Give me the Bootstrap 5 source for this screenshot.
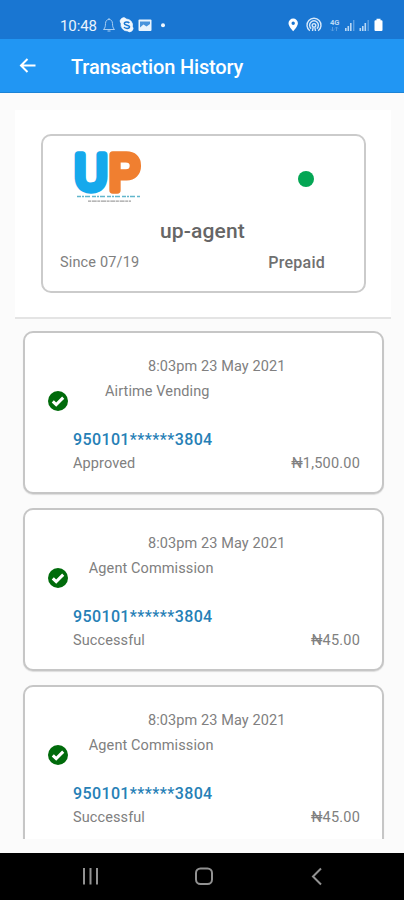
<!DOCTYPE html>
<html lang="en">
<head>
<meta charset="utf-8">
<meta name="viewport" content="width=device-width, initial-scale=1">
<title>Transaction History</title>
<link href="https://cdn.jsdelivr.net/npm/bootstrap@5.3.0/dist/css/bootstrap.min.css" rel="stylesheet">
<style>
body{font-family:Roboto,"Liberation Sans",sans-serif;background:#fbfbfb;color:#777;height:900px;overflow:hidden}
svg{display:block;flex:none}
.status-bar{height:39px;background:#1976d2;color:#eaf3fc;padding:12px 21px 0 60px}
.clock{font-size:15px;line-height:28px;letter-spacing:-.1px;width:43px}
.app-bar{height:54px;background:#2196f3;color:#fff;padding:0 19px;border-bottom:1px solid #1c83d6}
.app-bar h1{font-size:20px;font-weight:500;line-height:54px;margin-left:35px;padding-top:2px;letter-spacing:-.16px}
.screen{height:746px;overflow:hidden;padding:17px 13px 0 15px}
.profile-panel{height:209px;background:#fff;padding:24px 25px 0 26px;border-bottom:2px solid #e4e4e4}
.profile-card{height:159px;border:2px solid #cbcbcb;border-radius:10px;padding:16px 39px 0 17px}
.brand{margin-left:14px;overflow:visible}
.dot{width:16px;height:16px;background:#04a654;margin:19px 11px 0 0}
.agent{font-size:21px;font-weight:500;line-height:30px;color:#666;padding-left:20px;letter-spacing:.15px}
.since{font-size:14.5px;line-height:25px;color:#808080;letter-spacing:.15px}
.prepaid{font-size:16px;font-weight:500;line-height:25px;color:#707070;letter-spacing:.25px}
.tx-list{padding:12px 7px 0 8px;gap:14px}
.tx{height:163px;flex:none;border:2px solid #c6c6c6;border-radius:10px;background:#fff;padding:22px 22px 0 22px;box-shadow:0 1px 1px #ddd;font-size:14.5px;line-height:24.500px;color:#808080;letter-spacing:.1px}
.tx-head{height:72px}
.tx-icon{margin:36px 0 0 .5px}
.tx-info{width:218px}
.tx-kind{padding-right:72px}
.tx-kind-short{padding-right:76px}
.acct{font-size:16px;font-weight:500;color:#2680b6;padding-left:26px;line-height:25px;letter-spacing:.38px}
.tx-foot{padding-left:26px;line-height:23px}
.tx-foot .sum{letter-spacing:.2px}
.nav-keys{height:47px;background:#000}
.gap-end{height:14px}
</style>
</head>
<body>
<header>
<div class="status-bar d-flex align-items-start">
<span class="clock text-nowrap">10:48</span>
<svg width="68" height="27" viewBox="103 12 68 27" fill="none" stroke="#dbeaf9">
<path d="M103.500 29.500h11c-2-2-1.800-3.500-2-6-.2-2.800-1.500-4-3.500-4s-3.300 1.200-3.500 4c-.2 2.500 0 4-2 6ZM107.500 31h3M109 18v1.500" stroke="#a9cef2"/>
<path d="M126.500 19a6.300 6.300 0 0 1 6 7.500 3.400 3.400 0 0 1-5 4.500 6.300 6.300 0 0 1-6.500-7.500 3.400 3.400 0 0 1 5.500-4.500Z" fill="#f1f7fd" stroke="#f1f7fd" stroke-width=".6"/>
<path d="M129.300 23c-1-1.500-5-1.500-5 .6 0 2.100 5.200 1 5.200 3.200 0 2.200-4.500 2-5.500.2" stroke="#1976d2" stroke-width="1.500"/>
<rect x="138.500" y="19.500" width="13" height="11.500" rx="1" fill="#eaf4fd" stroke="none"/>
<path d="M140 21.500h10v2.500l-3.500 2.500-3-2-3.500 3Z" fill="#4a94dc" stroke="none"/>
<circle cx="163" cy="25.300" r="2" fill="#f0f7fd" stroke="none"/>
</svg>
<svg class="ms-auto" width="96" height="27" viewBox="287 12 96 27" fill="none">
<path fill-rule="evenodd" d="M293.200 18.500a4.700 4.700 0 0 1 4.700 4.700c0 3.200-4.700 8-4.700 8s-4.700-4.800-4.700-8a4.700 4.700 0 0 1 4.700-4.700Zm0 3a1.700 1.700 0 1 0 0 3.400 1.700 1.700 0 0 0 0-3.400Z" fill="#fff"/>
<g stroke="#d6e8fa" stroke-width="1.400"><path d="M309.800 30.800a7 7 0 1 1 8.400 0M311.200 28.600a4.400 4.400 0 1 1 5.600 0"/><path d="M312.500 31l.7-4a1.800 1.800 0 1 1 1.600 0l.7 4"/></g>
<text x="330" y="24.800" font-size="6.500" font-weight="700" fill="#b9d8f5" textLength="9.500" lengthAdjust="spacingAndGlyphs">4G</text>
<path d="M332.500 27v4M331 29.500l1.500 1.500 1.500-1.500M336.500 31v-4M335 28.500l1.500-1.500 1.500 1.500" stroke="#5c9fe1" stroke-width=".9"/>
<g fill="#b9d8f5"><path d="M345 28h1.600v3H345zM347.500 26h1.600v5h-1.600zM350 23h1.600v8H350zM359.500 28h1.600v3h-1.600zM362 26h1.600v5H362zM364.500 23h1.600v8h-1.600z"/><path d="M353 20h1.400v11H353zM367.500 20h1.400v11h-1.400z" opacity=".45"/></g>
<path d="M376.500 18.700h4v1.500h1q1 0 1 1V30q0 1-1 1h-6q-1 0-1-1v-8.800q0-1 1-1h1Z" fill="#fff"/>
</svg>
</div>
<div class="app-bar d-flex align-items-center">
<svg width="17" height="16" viewBox="0 0 17 16" fill="none" stroke="#fff" stroke-width="2"><path d="M16.500 7.500H2M8.500 1 2 7.500 8.500 14"/></svg>
<h1 class="mb-0">Transaction History</h1>
</div>
</header>
<main class="screen">
<section class="profile-panel">
<div class="profile-card">
<div class="d-flex justify-content-between align-items-start">
<svg class="brand" width="70" height="64" viewBox="75 152 70 64" fill="none">
<g font-family="'Liberation Sans',sans-serif" font-size="50" stroke-linejoin="round" stroke-width="7.500"><text x="75.500" y="190" textLength="33" lengthAdjust="spacingAndGlyphs" fill="#15a9ec" stroke="#15a9ec">U</text><text x="110" y="190" textLength="31" lengthAdjust="spacingAndGlyphs" fill="#f07f30" stroke="#f07f30">P</text></g>
<path d="M78 196.500h63" stroke="#62b6cc" stroke-width="1.500" stroke-dasharray="4 1 2 1 5 2"/>
<path d="M89 201.200h43" stroke="#a0a0a0" stroke-width="1.200" stroke-dasharray="3 .7 5 .6"/>
</svg>
<span class="dot rounded-circle"></span>
</div>
<div class="agent text-center">up-agent</div>
<div class="d-flex justify-content-between pt-1"><span class="since">Since 07/19</span><span class="prepaid">Prepaid</span></div>
</div>
</section>
<section class="tx-list d-flex flex-column">
<article class="tx">
<div class="tx-head d-flex"><svg class="tx-icon" width="20" height="20" viewBox="0 0 20 20"><circle cx="10" cy="10" r="10" fill="#006b0b"/><path d="m4.800 10.300 3.400 3.300 7-7" fill="none" stroke="#fff" stroke-width="3"/></svg><div class="tx-info text-end text-nowrap"><div class="tx-date">8:03pm 23 May 2021</div><div class="tx-kind-short">Airtime Vending</div></div></div>
<div class="acct">950101******3804</div>
<div class="tx-foot d-flex justify-content-between"><span>Approved</span><span class="sum">₦1,500.00</span></div>
</article>
<article class="tx">
<div class="tx-head d-flex"><svg class="tx-icon" width="20" height="20" viewBox="0 0 20 20"><circle cx="10" cy="10" r="10" fill="#006b0b"/><path d="m4.800 10.300 3.400 3.300 7-7" fill="none" stroke="#fff" stroke-width="3"/></svg><div class="tx-info text-end text-nowrap"><div class="tx-date">8:03pm 23 May 2021</div><div class="tx-kind">Agent Commission</div></div></div>
<div class="acct">950101******3804</div>
<div class="tx-foot d-flex justify-content-between"><span>Successful</span><span class="sum">₦45.00</span></div>
</article>
<article class="tx">
<div class="tx-head d-flex"><svg class="tx-icon" width="20" height="20" viewBox="0 0 20 20"><circle cx="10" cy="10" r="10" fill="#006b0b"/><path d="m4.800 10.300 3.400 3.300 7-7" fill="none" stroke="#fff" stroke-width="3"/></svg><div class="tx-info text-end text-nowrap"><div class="tx-date">8:03pm 23 May 2021</div><div class="tx-kind">Agent Commission</div></div></div>
<div class="acct">950101******3804</div>
<div class="tx-foot d-flex justify-content-between"><span>Successful</span><span class="sum">₦45.00</span></div>
</article>
</section>
</main>
<div class="gap-end"></div>
<footer class="nav-keys">
<svg width="404" height="47" viewBox="0 853 404 47" fill="none" stroke="#929292" stroke-width="2"><path d="M84 868v16.500M90.500 868v16.500M97 868v16.500"/><rect x="196" y="868.500" width="16" height="15.500" rx="4.500"/><path d="m321 868.500-8 8 8 8"/></svg>
</footer>
<script src="https://cdn.jsdelivr.net/npm/bootstrap@5.3.0/dist/js/bootstrap.bundle.min.js"></script>
</body>
</html>
